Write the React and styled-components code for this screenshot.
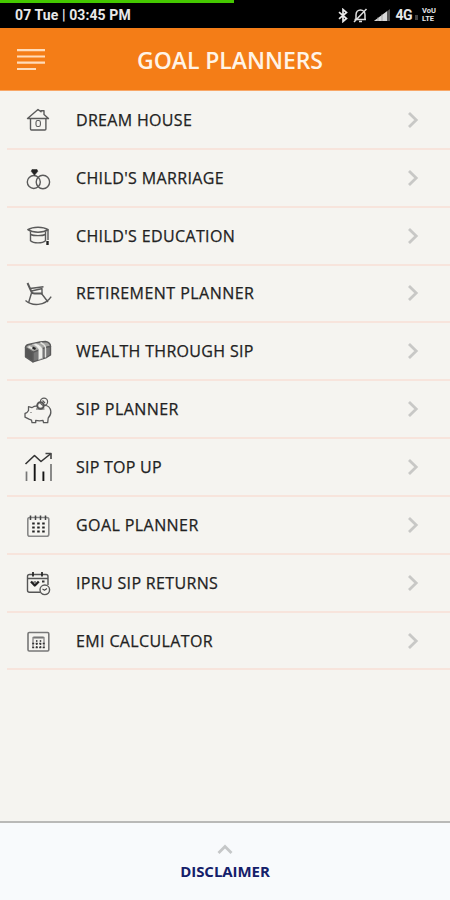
import React from "react";
import styled, { createGlobalStyle } from "styled-components";

const GlobalStyle = createGlobalStyle`
  * {
    box-sizing: border-box;
  }

  body {
    margin: 0;
    background: #f5f4f0;
    font-family: "Open Sans", "Noto Sans", sans-serif;
  }

  button {
    border: 0 none;
    padding: 0;
    background: transparent;
    font-family: inherit;
  }

  svg {
    display: block;
    flex: none;
  }
`;

const Screen = styled.div`
  display: flex;
  flex-direction: column;
  width: 450px;
  height: 900px;
  overflow: hidden;
  background: #f5f4f0;
`;

const Progress = styled.div`
  width: 234px;
  height: 3px;
  background: #45c800;
`;

const StatusBar = styled.div`
  flex: none;
  height: 28px;
  background: #000;

  .content {
    display: flex;
    align-items: center;
    justify-content: space-between;
    height: 24px;
    padding: 0 13px 0 15px;
    color: #e8e8e8;
    font-family: Roboto, sans-serif;
    font-size: 14px;
    font-weight: 700;
    letter-spacing: 0.1px;
    white-space: nowrap;
  }

  .icons {
    display: flex;
    align-items: center;
  }

  .icons svg {
    margin-right: 5px;
  }

  .network {
    font-size: 14px;
    letter-spacing: -0.6px;
  }

  .sub {
    margin: 5px 4px 0 3px;
    width: 3px;
    height: 5px;
    background: #444;
  }

  .volte {
    display: flex;
    flex-direction: column;
    width: 15px;
    font-size: 7.5px;
    font-weight: 700;
    line-height: 8.5px;
    letter-spacing: 0;
  }
`;

const Header = styled.header`
  display: flex;
  flex: none;
  align-items: center;
  height: 63px;
  padding: 0 17px;
  background: #f47d17;
  border-bottom: 1px solid #f8a767;

  h1 {
    flex: 1;
    margin: 0 19px 0 0;
    padding-top: 1px;
    color: #fff4e6;
    font-size: 23px;
    font-weight: 600;
    line-height: 30px;
    text-align: center;
    letter-spacing: -0.05px;
  }
`;

const List = styled.ul`
  flex: 1;
  margin: 0;
  padding: 1px 0 0 7px;
  list-style: none;
`;

const Row = styled.li`
  display: flex;
  align-items: center;
  height: 57.85px;
  padding: 0 31px 0 15px;
  border-bottom: 2px solid #f7e4dc;

  .goal-icon {
    margin-top: 1px;
  }
`;

const Label = styled.span`
  flex: 1;
  margin-left: 22px;
  color: #222;
  font-size: 16px;
  line-height: 22px;
  letter-spacing: ${props => props.$spacing || 0.37}px;
  -webkit-text-stroke: 0.25px #222;
`;

const Footer = styled.footer`
  display: flex;
  flex: none;
  flex-direction: column;
  align-items: center;
  height: 79px;
  padding-top: 21px;
  border-top: 2px solid #b9b9b7;
  background: #f8fafc;
  color: #14206a;
  font-size: 15px;
  font-weight: 700;
  line-height: 20px;
  letter-spacing: -0.05px;

  svg {
    margin-bottom: 6px;
  }
`;

const MenuIcon = () => (
  <svg width="29" height="24" viewBox="0 0 29 24" fill="none" stroke="#ffdcba" strokeWidth="2.2">
    <path d="M0 3.200h28M0 9.500h28M0 15.700h28M0 22h19" />
  </svg>
);

const BluetoothIcon = () => (
  <svg width="10" height="15" viewBox="0 0 10 15" fill="none" stroke="#e8e8e8" strokeWidth="1.7">
    <path d="M1 4.200l7.500 6.300-3.500 3V1.500l3.500 3L1 10.800" />
  </svg>
);

const SilentIcon = () => (
  <svg width="15" height="15" viewBox="0 0 15 15" fill="none" stroke="#dedede" strokeWidth="1.5">
    <path d="M1.500 11.500h11.500M3 11.500V7c0-3 2-5 4.500-5s4.500 2 4.500 5v4.500M6 13.500h3M13.500 1L1 14" />
  </svg>
);

const SignalIcon = () => (
  <svg width="18" height="14" viewBox="0 0 18 14">
    <path d="M1 13L17 1v12z" fill="#555" />
    <path d="M1 13L14 3.300v9.700z" fill="#d8d8d8" />
    <path d="M5 9v4M9 6v7" stroke="#888" strokeWidth="0.6" />
  </svg>
);

const Chevron = () => (
  <svg width="12" height="16" viewBox="0 0 12 16" fill="none" stroke="#c8c8c6" strokeWidth="2.800">
    <path d="M2 1l7.200 7L2 15" />
  </svg>
);

const ChevronUp = () => (
  <svg width="16" height="11" viewBox="0 0 16 11" fill="none" stroke="#c5c7c8" strokeWidth="2.8">
    <path d="M1.500 9L8 2.500 14.500 9" />
  </svg>
);

const GoalIcon = ({ children }) => (
  <svg
    className="goal-icon"
    width="32"
    height="32"
    viewBox="0 0 32 32"
    fill="none"
    stroke="#5a5a5a"
    strokeWidth="1.4"
    strokeLinejoin="round"
  >
    {children}
  </svg>
);

const HouseIcon = () => (
  <GoalIcon>
    <path d="M5.500 14.500L16 5.500l3 2.300V6.800h3v3.700l4.500 4z" />
    <path d="M8.500 14.500V25a1 1 0 0 0 1 1h13.400a1 1 0 0 0 1-1V14.500" />
    <rect x="14" y="16.500" width="4.400" height="6" rx="1.800" strokeWidth="1.100" />
  </GoalIcon>
);

const RingsIcon = () => (
  <GoalIcon>
    <circle cx="11.800" cy="20" r="6.500" />
    <circle cx="20.900" cy="20" r="6.700" />
    <path d="M10 7.500h5l.8 1.800-3.300 4-3.300-4z" fill="#222" stroke="#222" strokeWidth="0.5" />
  </GoalIcon>
);

const CapIcon = () => (
  <GoalIcon>
    <path d="M5.800 9.700C8.500 8 12 7.200 16 7.200s7.500.8 10.200 2.500c-2.700 1.700-6.200 2.500-10.200 2.500S8.500 11.400 5.800 9.700z" />
    <path d="M8.500 11.500v9.300c3 2.800 12 2.800 15 0v-9.300" />
    <path d="M8.500 14.500c3 1.500 12 1.500 15 0M26 10v10" />
    <path d="M25.500 21v4" stroke="#222" strokeWidth="2.400" />
  </GoalIcon>
);

const ChairIcon = () => (
  <GoalIcon>
    <path d="M5.500 5l4 8.800c.5 1.200 1.500 1.700 3 1.700h8" strokeWidth="2" />
    <path d="M8 10.500l13.500-1.800M9.500 13l11-2.500M20 10.500v5M9.500 15L6.500 25M19.500 15.500l6.500 8.500" />
    <path d="M3.500 22.500c6 5.600 19.500 6 25.700-3.800" />
  </GoalIcon>
);

const MoneyIcon = () => (
  <GoalIcon>
    <path d="M3.500 11.500l7.500 4.500v9.800l-7.500-5z" fill="#555" />
    <path d="M3.500 11.500c0-1.800 1.300-2.500 3-3L18 6l5.500-.500c3 .5 5 2.500 5 5L12 16.500z" fill="#a5a5a2" />
    <path d="M11 16.300l10-4c4-1.500 7-1.800 7.500-1.800V19l-4 2.500L11 25.800z" fill="#777" />
    <path d="M10 8.500c3 1 6 3 6.500 5.300v10l4-1.400v-9.600c-.6-2.200-3.500-4.500-6.500-5.300z" fill="#efefeb" stroke="#aaa" strokeWidth="0.700" />
    <path d="M18.500 6.500c3 1.500 5 3.500 5 5.500v9.500" stroke="#e3e3df" />
    <path d="M6.500 10.700l4.300 2" stroke="#e8e8e4" strokeWidth="2" />
    <path d="M10.500 11.500l3 1.500" stroke="#222" strokeWidth="2" />
  </GoalIcon>
);

const PiggyIcon = () => (
  <GoalIcon>
    <path d="M15.500 11.800c-3 0-4.500.7-5.500 1.800l-3.500-1v4c-.7 1.500-1.500 2.400-3.500 2.900v3.700l4 2 2.500 1 .5 2.500h3.700v-2.300c2.600.6 5.200.6 7.300 0l.5 2.300h4.200l.5-4.700c2-2 2.900-4 2.600-6.700-.4-3.500-3-6-6.300-6" strokeWidth="1.300" />
    <circle cx="18.500" cy="11.500" r="3.300" strokeWidth="1.900" stroke="#555" />
    <circle cx="22" cy="7.700" r="3.600" strokeWidth="1.200" />
    <path d="M14 15h8.500M20.500 6.500l2.500 2.500M8.500 18.500h1" strokeWidth="1.200" />
  </GoalIcon>
);

const ChartIcon = () => (
  <GoalIcon>
    <path d="M3.500 13L12.500 4.500l6.500 6L29 2.500" stroke="#333" strokeWidth="1.600" />
    <path d="M23.500 2.500H29V8" stroke="#444" strokeWidth="1.600" />
    <path d="M4.500 20.500V30M29 13v17" strokeWidth="1.700" stroke="#777" />
    <path d="M12.700 13v17M21.400 20.500V30" stroke="#151515" strokeWidth="1.900" />
  </GoalIcon>
);

const CalendarIcon = () => (
  <GoalIcon>
    <rect x="5.800" y="8.500" width="21" height="18.800" rx="2" stroke="#888" strokeWidth="1.600" />
    <path d="M8.500 6.500v4.500M13.500 6.500v4.500M18.500 6.500v4.500M23.500 6.500v4.500" stroke="#444" strokeWidth="1.500" />
    <path d="M10.200 14.500h12.500M10.200 18.500h12.500M10.200 22.500h12.500" stroke="#222" strokeWidth="2" strokeDasharray="2.500 2.500" />
  </GoalIcon>
);

const ReturnsIcon = () => (
  <GoalIcon>
    <path d="M18.500 25.300H7.500a2 2 0 0 1-2-2V9.500a2 2 0 0 1 2-2H24a2 2 0 0 1 2 2V18M5.500 11.500H26" stroke="#555" />
    <path d="M11 5v4.500M20 5v4.500" stroke="#222" strokeWidth="1.700" />
    <path d="M9 14.500l3.800 4 4-4M12.800 14.500v1" stroke="#222" strokeWidth="2.400" />
    <path d="M20 14.500h2.500" stroke="#333" strokeWidth="2" />
    <circle cx="22.800" cy="22.800" r="4.800" fill="#f5f4f0" />
    <path d="M20.500 22l2 1.200 2.500-1.700" stroke="#444" strokeWidth="1.100" />
  </GoalIcon>
);

const CalculatorIcon = () => (
  <GoalIcon>
    <rect x="6" y="7.500" width="20.800" height="18.500" rx="1.200" stroke="#777" strokeWidth="1.600" />
    <path d="M11 23V12.500h11V23" stroke="#888" strokeWidth="1.300" />
    <path d="M11.500 12.500h10" stroke="#777" strokeWidth="1.800" />
    <path d="M14.700 15v8M18.500 15v8" stroke="#555" strokeWidth="1.500" strokeDasharray="2 1" />
    <path d="M10.200 18.500h12.500M10.200 22.500h12.500" stroke="#333" strokeWidth="1.700" strokeDasharray="2 1.500" />
  </GoalIcon>
);

const GOALS = [
  { label: "DREAM HOUSE", Icon: HouseIcon, spacing: 0.32 },
  { label: "CHILD'S MARRIAGE", Icon: RingsIcon },
  { label: "CHILD'S EDUCATION", Icon: CapIcon },
  { label: "RETIREMENT PLANNER", Icon: ChairIcon, spacing: 0.46 },
  { label: "WEALTH THROUGH SIP", Icon: MoneyIcon, spacing: 0.32 },
  { label: "SIP PLANNER", Icon: PiggyIcon, spacing: 0.45 },
  { label: "SIP TOP UP", Icon: ChartIcon, spacing: 0.25 },
  { label: "GOAL PLANNER", Icon: CalendarIcon, spacing: 0.42 },
  { label: "IPRU SIP RETURNS", Icon: ReturnsIcon, spacing: 0.34 },
  { label: "EMI CALCULATOR", Icon: CalculatorIcon }
];

const App = () => (
  <>
    <GlobalStyle />
    <Screen>
      <StatusBar>
        <Progress />
        <div className="content">
          <span>07 Tue | 03:45 PM</span>
          <div className="icons">
            <BluetoothIcon />
            <SilentIcon />
            <SignalIcon />
            <span className="network">4G</span>
            <span className="sub" />
            <span className="volte">
              <span>VoU</span>
              <span>LTE</span>
            </span>
          </div>
        </div>
      </StatusBar>
      <Header>
        <button aria-label="Menu">
          <MenuIcon />
        </button>
        <h1>GOAL PLANNERS</h1>
      </Header>
      <List>
        {GOALS.map(({ label, Icon, spacing }) => (
          <Row key={label}>
            <Icon />
            <Label $spacing={spacing}>{label}</Label>
            <Chevron />
          </Row>
        ))}
      </List>
      <Footer>
        <ChevronUp />
        <span>DISCLAIMER</span>
      </Footer>
    </Screen>
  </>
);

export default App;
